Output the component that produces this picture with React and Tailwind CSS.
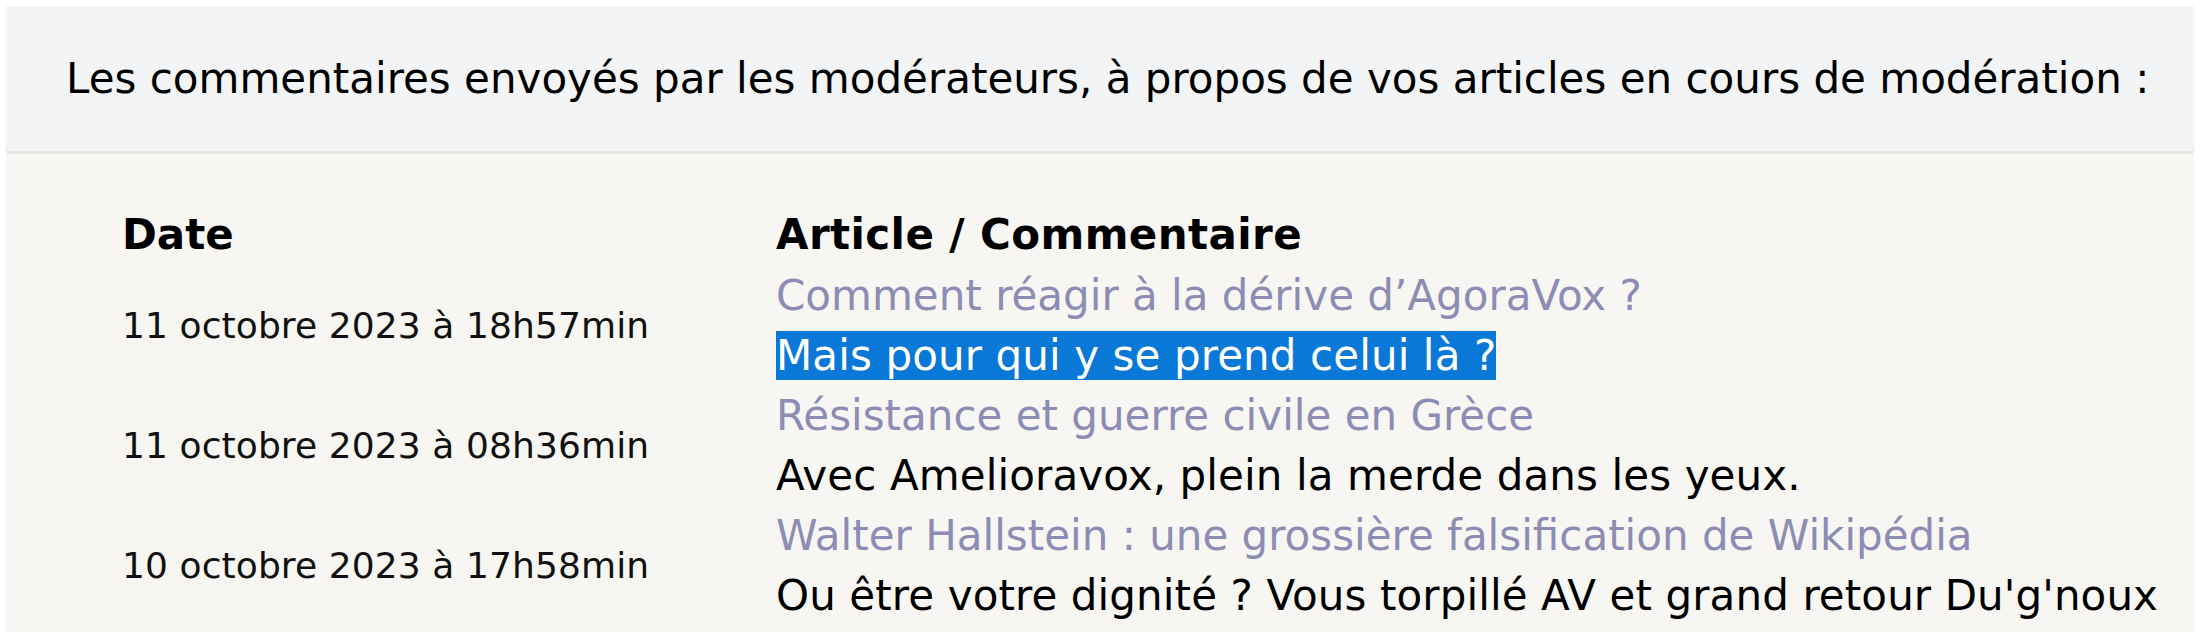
import React from "react";

const rows = [
  {
    date: "11 octobre 2023 à 18h57min",
    article: "Comment réagir à la dérive d’AgoraVox ?",
    comment: "Mais pour qui y se prend celui là ?",
    selected: true,
  },
  {
    date: "11 octobre 2023 à 08h36min",
    article: "Résistance et guerre civile en Grèce",
    comment: "Avec Amelioravox, plein la merde dans les yeux.",
  },
  {
    date: "10 octobre 2023 à 17h58min",
    article: "Walter Hallstein : une grossière falsification de Wikipédia",
    comment: "Ou être votre dignité ? Vous torpillé AV et grand retour Du'g'noux",
  },
];

export default function App() {
  return (
    <div
      className="w-[2200px] h-[638px] bg-white p-[6px] overflow-hidden"
      style={{ fontFamily: '"DejaVu Sans", Verdana, sans-serif' }}
    >
      <div className="h-[626px] bg-[#f7f6f3] flex flex-col">
        <div className="h-[147px] bg-[#f3f4f5] border-b-2 border-[#e4e4e4] rounded-[3px] shadow-[0_1px_2px_rgba(0,0,0,0.06)] flex items-center pl-[60px]">
          <p className="text-[42px] text-black">
            Les commentaires envoyés par les modérateurs, à propos de vos articles en cours de modération :
          </p>
        </div>
        <div className="pl-[116px] pt-[51px]">
          <table className="border-collapse">
            <thead>
              <tr className="h-[62px]">
                <th className="w-[654px] text-left align-middle font-bold text-[42px] leading-[60px] text-black p-0">
                  Date
                </th>
                <th className="text-left align-middle font-bold text-[42px] leading-[60px] tracking-[0.4px] text-black p-0">
                  Article / Commentaire
                </th>
              </tr>
            </thead>
            <tbody>
              {rows.map((r, i) => (
                <tr key={i}>
                  <td className="align-middle p-0 text-[36px] tracking-[0.1px] text-[#111]">{r.date}</td>
                  <td className="p-0 text-[42px] leading-[60px]">
                    <div className="text-[#8c8cb4] whitespace-nowrap">{r.article}</div>
                    <div className="text-black whitespace-nowrap tracking-[0.1px]">
                      {r.selected ? (
                        <span className="bg-[#0a78d7] text-white">{r.comment}</span>
                      ) : (
                        r.comment
                      )}
                    </div>
                  </td>
                </tr>
              ))}
            </tbody>
          </table>
        </div>
      </div>
    </div>
  );
}
